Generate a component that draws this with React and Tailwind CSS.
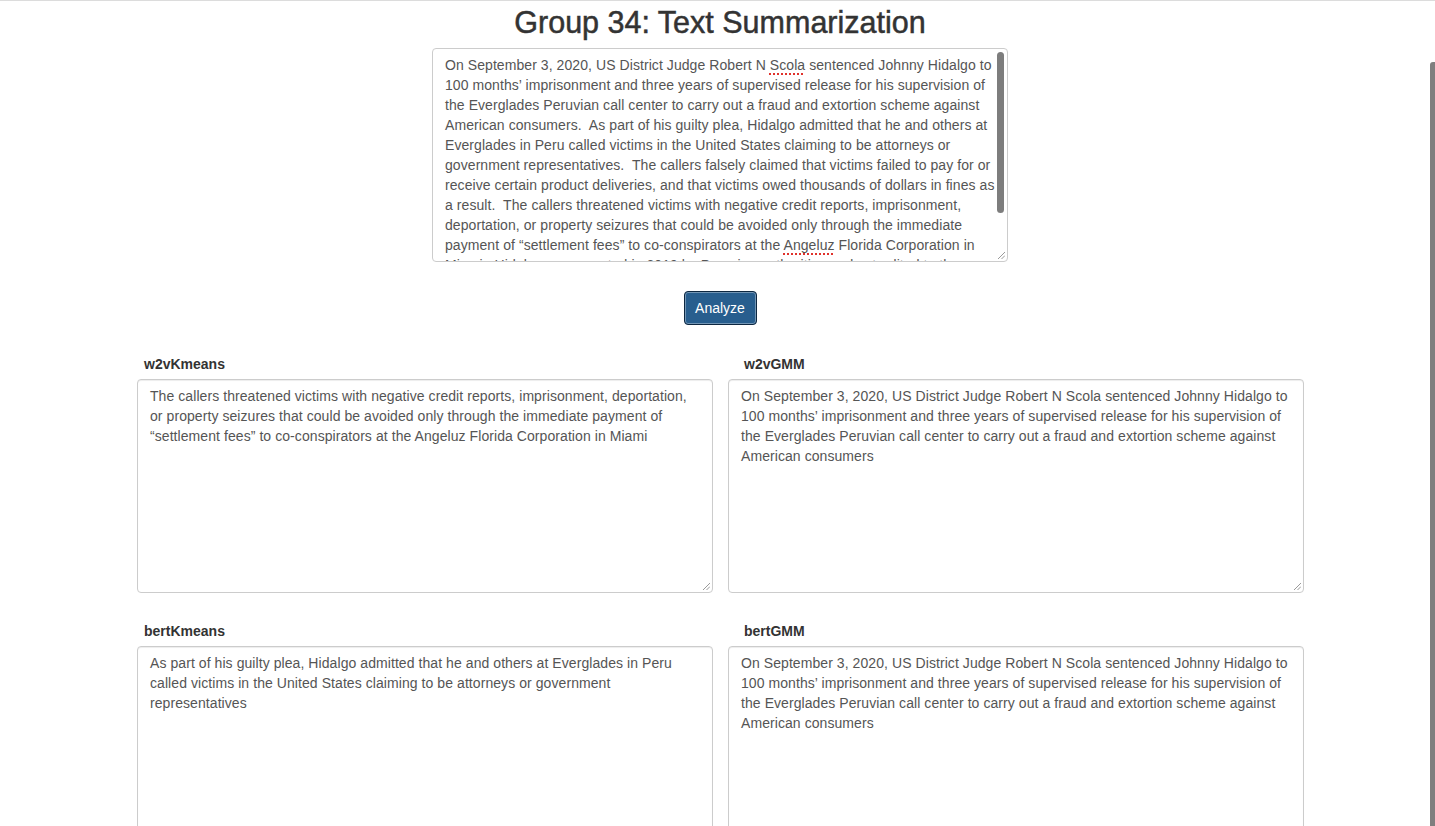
import React from "react";

const FONT = { fontFamily: '"Liberation Sans", Arial, Helvetica, sans-serif' };

function Grip() {
  return (
    <svg className="absolute right-[2px] bottom-[2px]" width="8" height="8" viewBox="0 0 8 8">
      <line x1="1" y1="8" x2="8" y2="1" stroke="#9a9a9a" strokeWidth="1" />
      <line x1="4.5" y1="8" x2="8" y2="4.5" stroke="#9a9a9a" strokeWidth="1" />
    </svg>
  );
}

function Box({ text, className = "" }) {
  return (
    <div className={"relative h-[214px] w-[576px] overflow-hidden rounded-[4px] border border-[#cccccc] bg-white px-[12px] py-[6px] text-[14px] leading-[20px] tracking-[0.07px] text-[#555555] shadow-[inset_0_1px_1px_rgba(0,0,0,0.075)] " + className}>
      {text}
      <Grip />
    </div>
  );
}

const sq = "underline decoration-dotted decoration-[#e0322c] decoration-[1.5px] underline-offset-[3px]";

export default function App() {
  const left1 =
    "The callers threatened victims with negative credit reports, imprisonment, deportation, or property seizures that could be avoided only through the immediate payment of \u201csettlement fees\u201d to co-conspirators at the Angeluz Florida Corporation in Miami";
  const right =
    "On September 3, 2020, US District Judge Robert N Scola sentenced Johnny Hidalgo to 100 months\u2019 imprisonment and three years of supervised release for his supervision of the Everglades Peruvian call center to carry out a fraud and extortion scheme against American consumers";
  const left2 =
    "As part of his guilty plea, Hidalgo admitted that he and others at Everglades in Peru called victims in the United States claiming to be attorneys or government representatives";

  return (
    <div style={FONT} className="min-h-[826px] w-full overflow-hidden border-t border-[#dcdcdc] bg-white text-[#333333]">
      <div className="flex flex-col items-center pl-[5px]">
        <h1 className="mt-[3px] text-[30.5px] leading-[36px] font-medium text-[#333333] [-webkit-text-stroke:0.5px_#333333]">
          Group 34: Text Summarization
        </h1>
        <div className="relative mt-[8px] h-[214px] w-[576px] overflow-hidden rounded-[4px] border border-[#cccccc] bg-white px-[12px] py-[6px] text-[14px] leading-[20px] tracking-[0.07px] text-[#555555]">
          <p>
            On September 3, 2020, US District Judge Robert N <span className={sq}>Scola</span> sentenced Johnny Hidalgo to 100 months&rsquo; imprisonment and three years of supervised release for his supervision of the Everglades Peruvian call center to carry out a fraud and extortion scheme against American consumers.&nbsp; As part of his guilty plea, Hidalgo admitted that he and others at Everglades in Peru called victims in the United States claiming to be attorneys or government representatives.&nbsp; The callers falsely claimed that victims failed to pay for or receive certain product deliveries, and that victims owed thousands of dollars in fines as a result.&nbsp; The callers threatened victims with negative credit reports, imprisonment, deportation, or property seizures that could be avoided only through the immediate payment of &ldquo;settlement fees&rdquo; to co-conspirators at the <span className={sq}>Angeluz</span> Florida Corporation in Miami.&nbsp; Hidalgo was arrested in 2019 by Peruvian authorities and extradited to the United States.
          </p>
          <div className="absolute top-[3px] right-[3px] h-[161px] w-[7px] rounded-full bg-[#7d7d7d]" />
          <Grip />
        </div>
        <button className="mt-[29px] h-[34px] w-[73px] rounded-[4px] border border-[#0d2741] bg-[#285e8e] text-[14px] text-white shadow-[inset_0_0_0_1px_rgba(255,255,255,0.35)]">
          Analyze
        </button>
        <div className="mt-[29px] ml-[1px] grid grid-cols-[576px_576px] gap-x-[15px]">
          <div className="flex flex-col">
            <div className="pl-[7px] text-[14px] leading-[20px] font-bold text-[#333333]">w2vKmeans</div>
            <Box className="mt-[5px]" text={left1} />
          </div>
          <div className="flex flex-col">
            <div className="pl-[16px] text-[14px] leading-[20px] font-bold text-[#333333]">w2vGMM</div>
            <Box className="mt-[5px]" text={right} />
          </div>
          <div className="mt-[28px] flex flex-col">
            <div className="pl-[7px] text-[14px] leading-[20px] font-bold text-[#333333]">bertKmeans</div>
            <Box className="mt-[5px]" text={left2} />
          </div>
          <div className="mt-[28px] flex flex-col">
            <div className="pl-[16px] text-[14px] leading-[20px] font-bold text-[#333333]">bertGMM</div>
            <Box className="mt-[5px]" text={right} />
          </div>
        </div>
      </div>
      <div className="fixed top-[62px] right-0 h-[800px] w-[5px] rounded-tl-[3px] bg-[#7f7f7f]" />
    </div>
  );
}
